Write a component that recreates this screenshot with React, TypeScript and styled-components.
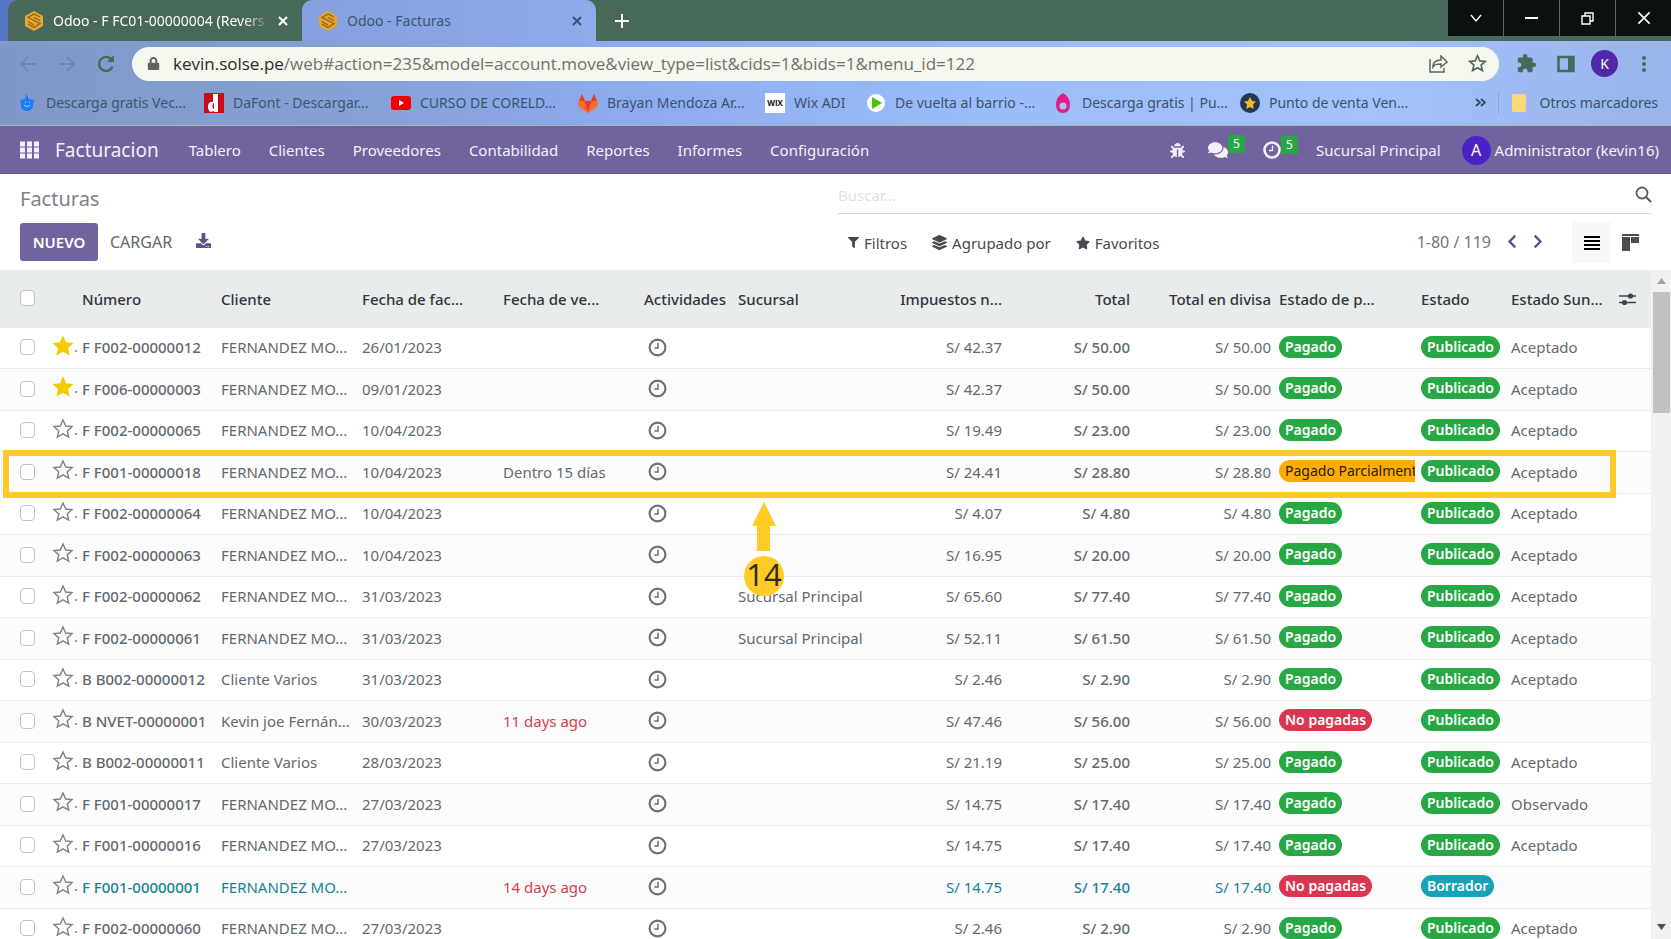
import React from "react";
import styled, { createGlobalStyle, css } from "styled-components";
import {
  FaBug, FaComments, FaFilter, FaLayerGroup, FaStar, FaDownload,
  FaChevronLeft, FaChevronRight, FaLock,
} from "react-icons/fa";
import { MdExtension } from "react-icons/md";

const ui = '"Noto Sans", "Open Sans", sans-serif';
const violet = "#71639e";
const amber = "#ffcb24";

const GlobalStyle = createGlobalStyle`
  * { box-sizing: border-box; }
  body { margin: 0; background: #fff; font-family: ${ui}; font-size: 15px; color: #5f666d; }
  button, input { font: inherit; color: inherit; }
  button { border: 0; padding: 0; background: none; display: inline-flex; align-items: center; justify-content: center; white-space: nowrap; }
  a { color: inherit; text-decoration: none; }
`;

const Page = styled.div`
  display: flex;
  flex-direction: column;
  height: 100vh;
  overflow: hidden;
`;

/* ---------- browser frame ---------- */

const TabStrip = styled.div`
  display: flex;
  align-items: stretch;
  height: 41px;
  flex: none;
  padding-left: 8px;
  background: linear-gradient(90deg, #5676c6 0 20px, #48695a 20px);
`;

const Tab = styled.div<{ $active?: boolean }>`
  display: flex;
  align-items: center;
  gap: 8px;
  width: 294px;
  padding: 0 14px 0 15px;
  font-size: 14px;
  white-space: nowrap;
  border-radius: ${(p) => (p.$active ? "10px 10px 0 0" : "10px 0 0 0")};
  color: ${(p) => (p.$active ? "#3d5272" : "#fff")};
  background: ${(p) => (p.$active ? "linear-gradient(90deg, #87a0de, #8eabec)" : "#48695a")};
`;

const TabTitle = styled.span<{ $fade?: boolean }>`
  flex: 1;
  overflow: hidden;
  ${(p) => p.$fade && css`mask-image: linear-gradient(90deg, #000 88%, transparent);`}
`;

const NewTab = styled.button`
  width: 52px;
  color: #fff;
`;

const WindowButtons = styled.div`
  display: flex;
  gap: 1px;
  height: 36px;
  margin-left: auto;
  background: #5a6a62;
`;

const WindowButton = styled.button`
  width: 55px;
  background: #0c1110;
  color: #fff;
`;

const Chrome = styled.div`
  flex: none;
  background: linear-gradient(90deg, #8098c8 0%, #86a0d4 20%, #8dacf0 38%, #9abcf8 58%, #a3c2fb 82%, #98b4ea 100%);
  border-bottom: 1px solid #a9b4ba;
`;

const Toolbar = styled.div`
  display: flex;
  align-items: center;
  height: 45px;
  padding: 0 8px;
  color: #48695a;
`;

const ToolButton = styled.button<{ $faded?: boolean }>`
  width: 39px;
  height: 34px;
  color: ${(p) => (p.$faded ? "#6f86b0" : "#48695a")};
`;

const AddressBar = styled.div`
  display: flex;
  align-items: center;
  flex: 1;
  height: 34px;
  margin: 0 8px 0 7px;
  padding: 0 2px 0 15px;
  border-radius: 17px;
  background: #f4f8ef;
  color: #5b665f;
`;

const AddressText = styled.div`
  flex: 1;
  margin-left: 13px;
  font-family: "Open Sans", "Noto Sans", sans-serif;
  font-size: 17px;
  white-space: nowrap;
  color: #6c726c;
  b { font-weight: 400; color: #262b28; }
`;

const Profile = styled.span`
  display: grid;
  place-items: center;
  width: 27px;
  height: 27px;
  border-radius: 50%;
  background: #5128a8;
  color: #fff;
  font-size: 14px;
`;

const Bookmarks = styled.nav`
  display: flex;
  align-items: center;
  gap: 20px;
  height: 39px;
  padding: 0 13px 6px 17px;
  font-size: 14px;
  color: #3d5272;
`;

const Bookmark = styled.a<{ $short?: boolean }>`
  display: flex;
  align-items: center;
  gap: 9px;
  width: ${(p) => (p.$short ? "81px" : "167px")};
  white-space: nowrap;
  svg { flex: none; }
`;

const MoreBookmarks = styled.div`
  display: flex;
  align-items: center;
  gap: 12px;
  margin-left: auto;
  white-space: nowrap;
`;

const MoreArrow = styled.button`
  padding-right: 12px;
  height: 22px;
  border-right: 1px solid #86a4de;
`;

/* ---------- application bar ---------- */

const AppBar = styled.header`
  display: flex;
  align-items: center;
  flex: none;
  height: 48px;
  padding: 1px 12px 0 20px;
  background: ${violet};
  border-bottom: 1px solid #5f5288;
  color: #f3effb;
  white-space: nowrap;
`;

const AppTitle = styled.a`
  margin: 0 30px 0 16px;
  font-size: 19px;
`;

const Menu = styled.nav`
  display: flex;
  gap: 28px;
`;

const Tray = styled.div`
  display: flex;
  align-items: center;
  gap: 35px;
  margin-left: auto;
`;

const TrayIcons = styled.div`
  display: flex;
  align-items: center;
  gap: 23px;
`;

const TrayButton = styled.button`
  position: relative;
`;

const Count = styled.span`
  position: absolute;
  left: 100%;
  top: -5px;
  width: 17px;
  height: 18px;
  background: #28a745;
  color: #fff;
  font-size: 12px;
  line-height: 17px;
  text-align: center;
`;

const Account = styled.div`
  display: flex;
  align-items: center;
  gap: 21px;
`;

const Avatar = styled.span`
  display: grid;
  place-items: center;
  width: 29px;
  height: 29px;
  margin-right: 4px;
  border-radius: 50%;
  background: #4b22c4;
  color: #fff;
  font-size: 16px;
`;

/* ---------- control panel ---------- */

const Panel = styled.section`
  display: grid;
  grid-template-columns: 1fr 1fr;
  grid-template-rows: 40px 56px;
  flex: none;
  padding: 0 19px 0 20px;
`;

const Title = styled.h1`
  margin: 0;
  padding-top: 11px;
  font-size: 20px;
  line-height: 28px;
  font-weight: 400;
  color: #7c8288;
`;

const SearchBox = styled.label`
  display: flex;
  align-items: center;
  margin-left: 2px;
  padding-top: 2px;
  border-bottom: 1px solid #d6d8da;
  color: #555b61;
`;

const SearchInput = styled.input`
  flex: 1;
  min-width: 0;
  padding: 0;
  border: 0;
  outline: 0;
  background: none;
  &::placeholder { color: #dfe1e3; opacity: 1; }
`;

const Actions = styled.div`
  display: flex;
  align-items: flex-start;
  padding-top: 9px;
`;

const Primary = styled.button`
  width: 78px;
  height: 38px;
  border-radius: 3px;
  background: ${violet};
  color: #fff;
  font-weight: 600;
`;

const Flat = styled.button`
  height: 38px;
  margin-left: 12px;
  color: #63676d;
  font-size: 16px;
`;

const IconAction = styled(Flat)`
  height: 34px;
  margin-left: 24px;
  color: #5c5288;
`;

const Filters = styled.div`
  display: flex;
  align-items: center;
  height: 41px;
  margin-top: 8px;
  padding-left: 12px;
  gap: 25px;
  color: #454b51;
`;

const FilterButton = styled.button`
  gap: 5px;
`;

const Pager = styled.div`
  display: flex;
  align-items: center;
  gap: 16px;
  margin: 0 4px 2px auto;
  font-size: 16px;
  color: #70767c;
`;

const PagerArrow = styled.button`
  width: 10px;
  color: #5c5288;
`;

const ViewSwitch = styled.div`
  display: flex;
  height: 41px;
  margin-right: 2px;
`;

const ViewButton = styled.button<{ $on?: boolean }>`
  width: 39px;
  background: ${(p) => (p.$on ? "#f8f8fa" : "transparent")};
  color: ${(p) => (p.$on ? "#000" : "#4a4d52")};
`;

/* ---------- list ---------- */

const ListArea = styled.main`
  position: relative;
  display: flex;
  flex: 1;
  min-height: 0;
`;

const TableClip = styled.div`
  flex: 1;
  min-width: 0;
  overflow: hidden;
`;

const Table = styled.table`
  width: 100%;
  table-layout: fixed;
  border-collapse: separate;
  border-spacing: 0;
`;

const HeadCell = styled.th<{ $right?: boolean }>`
  height: 58px;
  padding: 0 2px 0 6px;
  background: #e8ecec;
  color: #2f353b;
  font-weight: 500;
  text-align: ${(p) => (p.$right ? "right" : "left")};
  white-space: nowrap;
`;

const HeadCheck = styled(HeadCell)`
  padding: 0 0 2px 20px;
`;

const Row = styled.tr<{ $draft?: boolean }>`
  height: 41px;
  color: ${(p) => (p.$draft ? "#178391" : "#63696f")};
  &:nth-child(even) { height: 42px; background: #fcfcfc; }
`;

const Cell = styled.td<{ $right?: boolean; $strong?: boolean; $late?: boolean; $flush?: boolean }>`
  padding: 0 ${(p) => (p.$flush ? "0" : "2px")} 2px 6px;
  border-bottom: 1px solid #e9ebed;
  overflow: hidden;
  white-space: nowrap;
  line-height: 22px;
  text-align: ${(p) => (p.$right ? "right" : "left")};
  ${(p) => p.$strong && css`font-weight: 500;`}
  ${(p) => p.$late && css`color: #d23f4d;`}
`;

const CheckCell = styled(Cell)`
  padding: 0 0 2px 20px;
`;

const StarCell = styled(Cell)`
  padding: 0 0 5px 5px;
  overflow: visible;
`;

const Check = styled.input`
  appearance: none;
  display: block;
  width: 15px;
  height: 16px;
  margin: 0;
  border: 1px solid #bfc3c7;
  border-radius: 4px;
  background: #fff;
`;

const StarButton = styled.button`
  display: flex;
  color: #7d8287;
`;

const ActivityButton = styled.button`
  display: flex;
  padding-left: 4px;
  color: #6b7075;
`;

const badgeColors = { green: "#28a745", orange: "#ffac00", red: "#dc3550", teal: "#17a2b8" };

const Badge = styled.span<{ $tone: keyof typeof badgeColors }>`
  display: block;
  width: fit-content;
  height: 22px;
  margin-bottom: 1px;
  padding: 0 6px;
  border-radius: 11px;
  background: ${(p) => badgeColors[p.$tone]};
  color: ${(p) => (p.$tone === "orange" ? "#26200f" : "#fff")};
  font-size: 14px;
  font-weight: ${(p) => (p.$tone === "orange" ? 400 : 600)};
  line-height: 22px;
`;

const Scrollbar = styled.div`
  display: flex;
  flex-direction: column;
  align-items: center;
  flex: none;
  width: 20px;
  padding: 8px 0 9px;
  background: #f1f1f1;
`;

const Thumb = styled.div`
  width: 17px;
  height: 121px;
  margin: 8px 0 auto;
  background: #c1c1c1;
`;

const Highlight = styled.div`
  position: absolute;
  left: 3px;
  right: 55px;
  top: 180px;
  height: 48px;
  border: 6px solid ${amber};
  pointer-events: none;
`;

const Callout = styled.div`
  position: absolute;
  left: 744px;
  top: 232px;
  display: flex;
  flex-direction: column;
  align-items: center;
  gap: 5px;
`;

const CalloutNumber = styled.span`
  display: grid;
  place-items: center;
  width: 40px;
  height: 40px;
  padding-bottom: 4px;
  border-radius: 50%;
  background: ${amber};
  color: #2c2a20;
  font-family: "Open Sans", sans-serif;
  font-size: 31px;
  line-height: 36px;
`;

/* ---------- drawings ---------- */

const SolseLogo = () => (
  <svg width="22" height="22" viewBox="0 0 22 22" aria-hidden="true">
    <path d="M11 1l9 5v10l-9 5-9-5V6z" fill="#e9a52c" />
    <path d="M17 7l-6-3-6 3.500 12 6-6 4-6-3.500M17 10.500L11 7.500M5 11.500l6 3.500" fill="none" stroke="#8a6420" strokeWidth="1.300" />
  </svg>
);

const Cross = ({ size = 10, width = 2 }: { size?: number; width?: number }) => (
  <svg width={size} height={size} viewBox="0 0 10 10" aria-hidden="true">
    <path d="M1 1l8 8M9 1L1 9" stroke="currentColor" strokeWidth={width} fill="none" />
  </svg>
);

const Arrow = ({ flip }: { flip?: boolean }) => (
  <svg width="18" height="18" viewBox="0 0 18 18" aria-hidden="true">
    <path d={flip ? "M1 9h15M9 2l7 7-7 7" : "M17 9H2M9 2L2 9l7 7"} stroke="currentColor" strokeWidth="2" fill="none" />
  </svg>
);

const Reload = () => (
  <svg width="20" height="20" viewBox="0 0 20 20" aria-hidden="true">
    <path d="M16.500 12.500A7 7 0 1 1 15 5" stroke="currentColor" strokeWidth="2.400" fill="none" />
    <path d="M18 1v7h-7z" fill="currentColor" />
  </svg>
);

const starPath = "M11 2l2.700 6 6.300.6-4.800 4.300 1.500 6.300L11 15.900l-5.700 3.300 1.500-6.300L2 8.600 8.300 8z";

const StarShape = ({ filled, size = 22, width = 1.4 }: { filled?: boolean; size?: number; width?: number }) => (
  <svg width={size} height={size} viewBox="0 0 22 22" aria-hidden="true">
    <path d={starPath} fill={filled ? "#f3cc00" : "none"} stroke={filled ? "#f3cc00" : "currentColor"} strokeWidth={width} />
  </svg>
);

const Clock = ({ size = 19, width = 2 }: { size?: number; width?: number }) => (
  <svg width={size} height={size} viewBox="0 0 18 18" aria-hidden="true">
    <circle cx="9" cy="9" r="7.500" fill="none" stroke="currentColor" strokeWidth={width} />
    <path d="M9.500 4.500v5H6" fill="none" stroke="currentColor" strokeWidth="1.400" />
  </svg>
);

const Magnifier = () => (
  <svg width="17" height="17" viewBox="0 0 17 17" aria-hidden="true">
    <circle cx="7" cy="7" r="5.500" fill="none" stroke="currentColor" strokeWidth="1.800" />
    <path d="M11 11l5 5" stroke="currentColor" strokeWidth="2" />
  </svg>
);

const Grid9 = () => (
  <svg width="19" height="18" viewBox="0 0 19 18" fill="currentColor" aria-hidden="true">
    {[0, 7, 14].map((x) => [0, 6, 12].map((y) => <rect key={`${x}-${y}`} x={x} y={y + 0.5} width="5" height="5" />))}
  </svg>
);

const Sliders = () => (
  <svg width="17" height="14" viewBox="0 0 17 14" aria-hidden="true">
    <path d="M0 4h17M0 10.500h17" stroke="#3f454b" strokeWidth="1.600" />
    <circle cx="11.500" cy="4" r="2.600" fill="#3f454b" />
    <circle cx="5.500" cy="10.500" r="2.600" fill="#3f454b" />
  </svg>
);

const OptionsButton = styled.button`
  display: flex;
  padding-left: 3px;
`;

const Triangle = ({ down }: { down?: boolean }) => (
  <svg width="9" height="6" viewBox="0 0 9 6" aria-hidden="true">
    <path d={down ? "M0 0h9L4.500 6z" : "M0 6h9L4.500 0z"} fill={down ? "#505050" : "#a3a3a3"} />
  </svg>
);

const bookmarkIcons: Record<string, React.ReactNode> = {
  vec: (
    <svg width="20" height="20" viewBox="0 0 20 20">
      <path d="M3 7l5-1 1-5 3 5 6 1-2 3c1 5-2 8-6 8s-7-3-6-7z" fill="#1f7bf2" />
      <path d="M7 12a3.500 3 0 0 0 6 0M8 9h1M12 9h1" stroke="#8fc0ff" strokeWidth="1.300" fill="none" />
    </svg>
  ),
  dafont: (
    <svg width="20" height="20" viewBox="0 0 20 20">
      <path d="M0 0h20v20H0z" fill="#cf0a18" />
      <path d="M9 1h5v18h-4v-1c-4 2-6 0-6-4s2-6 5-5zM10 10c-2 0-2 6 0 6z" fill="#fff" fillRule="evenodd" />
    </svg>
  ),
  youtube: (
    <svg width="20" height="20" viewBox="0 0 20 20">
      <rect y="3" width="20" height="14" rx="3" fill="#f20000" />
      <path d="M8 7l5 3-5 3z" fill="#fff" />
    </svg>
  ),
  gitlab: (
    <svg width="20" height="20" viewBox="0 0 20 20">
      <path d="M4 1L0 11l1 3 9 6 9-6 1-3-4-10-3 7H7z" fill="#fc6d26" />
      <path d="M7 8h6l-3 12z" fill="#e8382a" />
      <path d="M4 1L1 8h6zM16 1l3 7h-6z" fill="#e2432a" />
    </svg>
  ),
  wix: (
    <svg width="20" height="20" viewBox="0 0 20 20">
      <path d="M0 0h20v20H0z" fill="#fff" />
      <text x="10" y="13" fontSize="8" fontWeight="700" fontFamily="Open Sans" textAnchor="middle" fill="#111">WIX</text>
    </svg>
  ),
  play: (
    <svg width="20" height="20" viewBox="0 0 20 20">
      <circle cx="10" cy="10" r="9" fill="#fff" />
      <path d="M6 4l10 6-10 6z" fill="#4bc40c" />
    </svg>
  ),
  egg: (
    <svg width="20" height="20" viewBox="0 0 20 20">
      <path d="M10 0c5 3 7 7 7 12 0 5-3 8-7 8s-7-3-7-8C3 7 5 3 10 0z" fill="#df1f86" />
      <circle cx="10" cy="13" r="3.500" fill="#a3c2fb" />
    </svg>
  ),
  star: (
    <svg width="20" height="20" viewBox="0 0 20 20">
      <circle cx="10" cy="10" r="10" fill="#22394f" />
      <path d="M10 4l2 4 4 .6-3 3 .7 4.400L10 14l-3.700 2 .7-4.400-3-3L8 8z" fill="#f9b62a" />
    </svg>
  ),
};

/* ---------- data ---------- */

const bookmarks: [string, string][] = [
  ["vec", "Descarga gratis Vec..."],
  ["dafont", "DaFont - Descargar..."],
  ["youtube", "CURSO DE CORELD..."],
  ["gitlab", "Brayan Mendoza Ar..."],
  ["wix", "Wix ADI"],
  ["play", "De vuelta al barrio -..."],
  ["egg", "Descarga gratis | Pu..."],
  ["star", "Punto de venta Ven..."],
];

const menu = ["Tablero", "Clientes", "Proveedores", "Contabilidad", "Reportes", "Informes", "Configuración"];

const columnWidths = [47, 29, 139, 141, 141, 141, 94, 135, 137, 128, 141, 142, 90, 105, 41];

type Invoice = {
  fav?: boolean; number: string; client?: string; date: string; due?: string; late?: boolean;
  branch?: string; tax: string; total: string; pay?: string; draft?: boolean; sunat?: string;
};

const invoices: Invoice[] = [
  { fav: true, number: "F F002-00000012", date: "26/01/2023", tax: "42.37", total: "50.00", sunat: "Aceptado" },
  { fav: true, number: "F F006-00000003", date: "09/01/2023", tax: "42.37", total: "50.00", sunat: "Aceptado" },
  { number: "F F002-00000065", date: "10/04/2023", tax: "19.49", total: "23.00", sunat: "Aceptado" },
  { number: "F F001-00000018", date: "10/04/2023", due: "Dentro 15 días", tax: "24.41", total: "28.80", pay: "Pagado Parcialmente", sunat: "Aceptado" },
  { number: "F F002-00000064", date: "10/04/2023", tax: "4.07", total: "4.80", sunat: "Aceptado" },
  { number: "F F002-00000063", date: "10/04/2023", tax: "16.95", total: "20.00", sunat: "Aceptado" },
  { number: "F F002-00000062", date: "31/03/2023", branch: "Sucursal Principal", tax: "65.60", total: "77.40", sunat: "Aceptado" },
  { number: "F F002-00000061", date: "31/03/2023", branch: "Sucursal Principal", tax: "52.11", total: "61.50", sunat: "Aceptado" },
  { number: "B B002-00000012", client: "Cliente Varios", date: "31/03/2023", tax: "2.46", total: "2.90", sunat: "Aceptado" },
  { number: "B NVET-00000001", client: "Kevin joe Fernán...", date: "30/03/2023", due: "11 days ago", late: true, tax: "47.46", total: "56.00", pay: "No pagadas" },
  { number: "B B002-00000011", client: "Cliente Varios", date: "28/03/2023", tax: "21.19", total: "25.00", sunat: "Aceptado" },
  { number: "F F001-00000017", date: "27/03/2023", tax: "14.75", total: "17.40", sunat: "Observado" },
  { number: "F F001-00000016", date: "27/03/2023", tax: "14.75", total: "17.40", sunat: "Aceptado" },
  { number: "F F001-00000001", date: "", due: "14 days ago", late: true, tax: "14.75", total: "17.40", pay: "No pagadas", draft: true },
  { number: "F F002-00000060", date: "27/03/2023", tax: "2.46", total: "2.90", sunat: "Aceptado" },
];

const payTone = (pay: string) => (pay === "Pagado" ? "green" : pay === "No pagadas" ? "red" : "orange");

/* ---------- page ---------- */

const BrowserFrame = () => (
  <>
    <TabStrip>
      <Tab>
        <SolseLogo />
        <TabTitle $fade>Odoo - F FC01-00000004 (Revers</TabTitle>
        <button aria-label="Cerrar pestaña"><Cross /></button>
      </Tab>
      <Tab $active>
        <SolseLogo />
        <TabTitle>Odoo - Facturas</TabTitle>
        <button aria-label="Cerrar pestaña"><Cross /></button>
      </Tab>
      <NewTab aria-label="Nueva pestaña">
        <svg width="14" height="14" viewBox="0 0 14 14"><path d="M7 0v14M0 7h14" stroke="currentColor" strokeWidth="2" /></svg>
      </NewTab>
      <WindowButtons>
        <WindowButton aria-label="Buscar pestañas">
          <svg width="12" height="8" viewBox="0 0 12 8"><path d="M1 1l5 6 5-6" fill="none" stroke="currentColor" strokeWidth="1.300" /></svg>
        </WindowButton>
        <WindowButton aria-label="Minimizar">
          <svg width="13" height="2"><path d="M0 1h13" stroke="currentColor" strokeWidth="2" /></svg>
        </WindowButton>
        <WindowButton aria-label="Restaurar">
          <svg width="13" height="13" viewBox="0 0 13 13"><path d="M1 4h8v8H1zM4 4V1h8v8H9" fill="none" stroke="currentColor" strokeWidth="1.400" /></svg>
        </WindowButton>
        <WindowButton aria-label="Cerrar"><Cross size={14} width={1.2} /></WindowButton>
      </WindowButtons>
    </TabStrip>
    <Chrome>
      <Toolbar>
        <ToolButton $faded aria-label="Atrás"><Arrow /></ToolButton>
        <ToolButton $faded aria-label="Adelante"><Arrow flip /></ToolButton>
        <ToolButton aria-label="Recargar"><Reload /></ToolButton>
        <AddressBar>
          <FaLock size={13} />
          <AddressText>
            <b>kevin.solse.pe</b>/web#action=235&amp;model=account.move&amp;view_type=list&amp;cids=1&amp;bids=1&amp;menu_id=122
          </AddressText>
          <ToolButton aria-label="Compartir">
            <svg width="19" height="18" viewBox="0 0 19 18" fill="none" stroke="#5b665f" strokeWidth="1.500">
              <path d="M1 4v13h14v-4M4 12c0-5 3-7 8-7V1l6 6-6 5V9c-4 0-6 0-8 3z" />
            </svg>
          </ToolButton>
          <ToolButton aria-label="Añadir a marcadores"><StarShape size={19} width={1.9} /></ToolButton>
        </AddressBar>
        <ToolButton aria-label="Extensiones"><MdExtension size={21} /></ToolButton>
        <ToolButton aria-label="Panel lateral">
          <svg width="18" height="18" viewBox="0 0 18 18"><path d="M1.500 2h15v14h-15z" fill="none" stroke="currentColor" strokeWidth="2.500" /><path d="M11 2h6v14h-6z" fill="currentColor" /></svg>
        </ToolButton>
        <ToolButton aria-label="Perfil"><Profile>K</Profile></ToolButton>
        <ToolButton aria-label="Menú">
          <svg width="4" height="18" fill="currentColor"><circle cx="2" cy="3" r="2" /><circle cx="2" cy="9" r="2" /><circle cx="2" cy="15" r="2" /></svg>
        </ToolButton>
      </Toolbar>
      <Bookmarks>
        {bookmarks.map(([icon, text]) => (
          <Bookmark href="#" key={icon} $short={icon === "wix"}>{bookmarkIcons[icon]}{text}</Bookmark>
        ))}
        <MoreBookmarks>
          <MoreArrow aria-label="Más marcadores">
            <svg width="11" height="9" viewBox="0 0 11 9"><path d="M1 1l4 3.500L1 8M6 1l4 3.500L6 8" fill="none" stroke="#34465c" strokeWidth="1.700" /></svg>
          </MoreArrow>
          <svg width="16" height="18"><rect x="1" width="14" height="18" rx="2" fill="#fbd978" /></svg>
          <a href="#">Otros marcadores</a>
        </MoreBookmarks>
      </Bookmarks>
    </Chrome>
  </>
);

const ApplicationBar = () => (
  <AppBar>
    <button aria-label="Aplicaciones"><Grid9 /></button>
    <AppTitle href="#">Facturacion</AppTitle>
    <Menu>{menu.map((m) => <a href="#" key={m}>{m}</a>)}</Menu>
    <Tray>
      <TrayIcons>
        <TrayButton aria-label="Depurar"><FaBug size={15} /></TrayButton>
        <TrayButton aria-label="Mensajes"><FaComments size={20} /><Count>5</Count></TrayButton>
      </TrayIcons>
      <TrayButton aria-label="Actividades"><Clock size={18} width={2.6} /><Count>5</Count></TrayButton>
      <Account>
        <button>Sucursal Principal</button>
        <button><Avatar>A</Avatar>Administrator (kevin16)</button>
      </Account>
    </Tray>
  </AppBar>
);

const ControlPanel = () => (
  <Panel>
    <Title>Facturas</Title>
    <SearchBox>
      <SearchInput placeholder="Buscar..." aria-label="Buscar" />
      <Magnifier />
    </SearchBox>
    <Actions>
      <Primary>NUEVO</Primary>
      <Flat>CARGAR</Flat>
      <IconAction aria-label="Exportar"><FaDownload size={15} /></IconAction>
    </Actions>
    <Filters>
      <FilterButton><FaFilter size={11} />Filtros</FilterButton>
      <FilterButton><FaLayerGroup size={15} />Agrupado por</FilterButton>
      <FilterButton><FaStar size={14} />Favoritos</FilterButton>
      <Pager>
        <span>1-80 / 119</span>
        <PagerArrow aria-label="Anterior"><FaChevronLeft size={15} /></PagerArrow>
        <PagerArrow aria-label="Siguiente"><FaChevronRight size={15} /></PagerArrow>
      </Pager>
      <ViewSwitch>
        <ViewButton $on aria-label="Lista">
          <svg width="16" height="14" fill="currentColor"><path d="M0 0h16v2H0zM0 4h16v2H0zM0 8h16v2H0zM0 12h16v2H0z" /></svg>
        </ViewButton>
        <ViewButton aria-label="Kanban">
          <svg width="17" height="17" fill="currentColor"><path d="M0 0h17v2H0zM0 3h8v14H0zM9 3h8v6H9z" /></svg>
        </ViewButton>
      </ViewSwitch>
    </Filters>
  </Panel>
);

const InvoiceRow = ({ inv }: { inv: Invoice }) => {
  const pay = inv.pay ?? "Pagado";
  return (
    <Row $draft={inv.draft}>
      <CheckCell><Check type="checkbox" aria-label={`Seleccionar ${inv.number}`} /></CheckCell>
      <StarCell><StarButton aria-label="Favorito"><StarShape filled={inv.fav} />.</StarButton></StarCell>
      <Cell $strong>{inv.number}</Cell>
      <Cell>{inv.client ?? "FERNANDEZ MO..."}</Cell>
      <Cell>{inv.date}</Cell>
      <Cell $late={inv.late}>{inv.due}</Cell>
      <Cell><ActivityButton aria-label="Actividades"><Clock /></ActivityButton></Cell>
      <Cell>{inv.branch}</Cell>
      <Cell $right>S/ {inv.tax}</Cell>
      <Cell $right $strong>S/ {inv.total}</Cell>
      <Cell $right>S/ {inv.total}</Cell>
      <Cell $flush><Badge $tone={payTone(pay)}>{pay}</Badge></Cell>
      <Cell $flush><Badge $tone={inv.draft ? "teal" : "green"}>{inv.draft ? "Borrador" : "Publicado"}</Badge></Cell>
      <Cell>{inv.sunat}</Cell>
      <Cell />
    </Row>
  );
};

export default function App() {
  return (
    <Page>
      <GlobalStyle />
      <BrowserFrame />
      <ApplicationBar />
      <ControlPanel />
      <ListArea>
        <TableClip>
          <Table>
            <colgroup>{columnWidths.map((w, i) => <col key={i} width={w} />)}</colgroup>
            <thead>
              <tr>
                <HeadCheck><Check type="checkbox" aria-label="Seleccionar todo" /></HeadCheck>
                <HeadCell />
                <HeadCell>Número</HeadCell>
                <HeadCell>Cliente</HeadCell>
                <HeadCell>Fecha de fac...</HeadCell>
                <HeadCell>Fecha de ve...</HeadCell>
                <HeadCell>Actividades</HeadCell>
                <HeadCell>Sucursal</HeadCell>
                <HeadCell $right>Impuestos n...</HeadCell>
                <HeadCell $right>Total</HeadCell>
                <HeadCell $right>Total en divisa</HeadCell>
                <HeadCell>Estado de p...</HeadCell>
                <HeadCell>Estado</HeadCell>
                <HeadCell>Estado Sun...</HeadCell>
                <HeadCell><OptionsButton aria-label="Columnas opcionales"><Sliders /></OptionsButton></HeadCell>
              </tr>
            </thead>
            <tbody>{invoices.map((inv) => <InvoiceRow key={inv.number} inv={inv} />)}</tbody>
          </Table>
        </TableClip>
        <Scrollbar>
          <Triangle />
          <Thumb />
          <Triangle down />
        </Scrollbar>
        <Highlight />
        <Callout>
          <svg width="24" height="49" viewBox="0 0 24 49"><path d="M12 0l12 24h-6v25H5V24H0z" fill={amber} /></svg>
          <CalloutNumber>14</CalloutNumber>
        </Callout>
      </ListArea>
    </Page>
  );
}
